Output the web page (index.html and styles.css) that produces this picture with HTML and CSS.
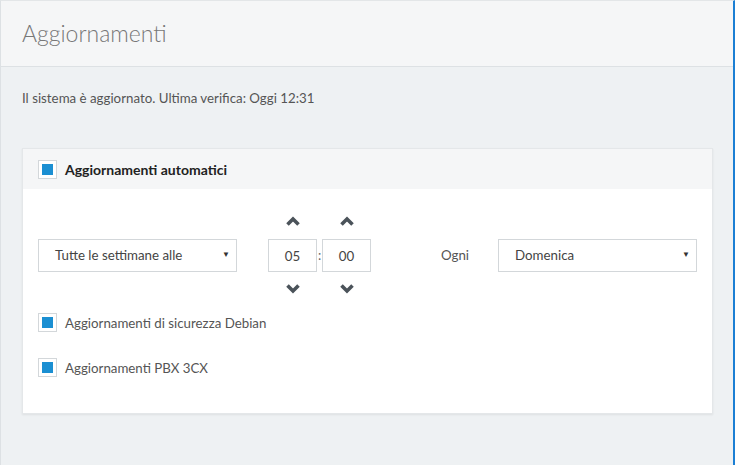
FILE: index.html
```html
<!DOCTYPE html>
<html lang="it">
<head>
<meta charset="utf-8">
<title>Aggiornamenti</title>
<link rel="stylesheet" href="styles.css">
</head>
<body>
<div class="page">
  <header class="page-header">
    <h1 class="page-title">Aggiornamenti</h1>
  </header>
  <main class="page-content">
    <p class="status">Il sistema è aggiornato. Ultima verifica: Oggi 12:31</p>
    <section class="card">
      <div class="card-header">
        <span class="checkbox"><span class="check-fill"></span></span>
        <span class="card-title">Aggiornamenti automatici</span>
      </div>
      <div class="card-body">
        <div class="schedule">
          <div class="select select-wide">
            <span class="select-text">Tutte le settimane alle</span>
            <span class="select-arrow">▼</span>
          </div>
          <div class="time">
            <div class="time-col">
              <span class="chev"><svg viewBox="0 0 14 10" width="14" height="10"><path d="M1.5 8.5 L7 3 L12.5 8.5" fill="none" stroke="#4b535a" stroke-width="3.6" stroke-linejoin="miter"/></svg></span>
              <div class="time-box">05</div>
              <span class="chev"><svg viewBox="0 0 14 10" width="14" height="10"><path d="M1.5 1.5 L7 7 L12.5 1.5" fill="none" stroke="#4b535a" stroke-width="3.6" stroke-linejoin="miter"/></svg></span>
            </div>
            <span class="colon">:</span>
            <div class="time-col">
              <span class="chev"><svg viewBox="0 0 14 10" width="14" height="10"><path d="M1.5 8.5 L7 3 L12.5 8.5" fill="none" stroke="#4b535a" stroke-width="3.6" stroke-linejoin="miter"/></svg></span>
              <div class="time-box">00</div>
              <span class="chev"><svg viewBox="0 0 14 10" width="14" height="10"><path d="M1.5 1.5 L7 7 L12.5 1.5" fill="none" stroke="#4b535a" stroke-width="3.6" stroke-linejoin="miter"/></svg></span>
            </div>
          </div>
          <span class="every">Ogni</span>
          <div class="select select-wide">
            <span class="select-text">Domenica</span>
            <span class="select-arrow">▼</span>
          </div>
        </div>
        <div class="option">
          <span class="checkbox"><span class="check-fill"></span></span>
          <span class="option-label">Aggiornamenti di sicurezza Debian</span>
        </div>
        <div class="option">
          <span class="checkbox"><span class="check-fill"></span></span>
          <span class="option-label">Aggiornamenti PBX 3CX</span>
        </div>
      </div>
    </section>
  </main>
</div>
</body>
</html>
```
FILE: styles.css
```css
* { box-sizing: border-box; }
html, body { margin: 0; padding: 0; }
body {
  font-family: Lato, "Noto Sans", "Liberation Sans", sans-serif;
  color: #555;
  background: #eef1f3;
}
.page {
  width: 735px;
  height: 465px;
  background: #eef1f3;
  border-left: 1px solid #dde1e4;
  border-top: 1px solid #e3e6e8;
  border-right: 2px solid #1b7fd4;
  overflow: hidden;
}
.page-header {
  height: 66px;
  background: #f5f6f7;
  border-bottom: 1px solid #dde1e4;
  padding-left: 21px;
  display: flex;
  align-items: center;
}
.page-title {
  margin: 0 0 2px 0;
  font-size: 23px;
  font-weight: 300;
  color: #777;
}
.page-content {
  padding: 22px 20px 0 21px;
}
.status {
  margin: 0;
  font-size: 13.3px;
  line-height: 18px;
  color: #555;
}
.card {
  margin-top: 41px;
  background: #fff;
  border: 1px solid #e4e7e9;
  box-shadow: 0 1px 2px rgba(0,0,0,0.07);
}
.card-header {
  height: 40px;
  background: #f5f6f7;
  display: flex;
  align-items: center;
  padding-left: 15px;
  gap: 8px;
}
.card-title {
  font-size: 14px;
  font-weight: 700;
  color: #222;
}
.checkbox {
  width: 19px;
  height: 19px;
  border: 1px solid #d3d7da;
  background: #fff;
  display: flex;
  align-items: center;
  justify-content: center;
  flex: none;
}
.check-fill {
  width: 11px;
  height: 11px;
  background: #1b8fd2;
}
.card-body {
  padding: 20px 15px 36px 15px;
}
.schedule {
  display: flex;
  align-items: center;
}
.select {
  height: 33px;
  border: 1px solid #d3d7da;
  background: #fff;
  display: flex;
  align-items: center;
  justify-content: space-between;
  padding: 0 6px 0 16px;
  font-size: 13.3px;
  color: #444;
}
.select-wide { width: 199px; }
.select-arrow {
  font-size: 8px;
  color: #333;
  margin-top: -2px;
}
.time {
  display: flex;
  align-items: center;
  margin-left: 31px;
}
.time-col {
  display: flex;
  flex-direction: column;
  align-items: center;
}
.chev {
  height: 24px;
  display: flex;
  align-items: center;
  justify-content: center;
}
.time-col .time-box { margin: 6px 0 5px; }
.time-box {
  width: 49px;
  height: 33px;
  border: 1px solid #d3d7da;
  display: flex;
  align-items: center;
  justify-content: center;
  font-size: 13.3px;
  color: #444;
}
.colon {
  width: 5px;
  text-align: center;
  font-size: 13px;
  color: #666;
}
.every {
  margin-left: 70px;
  width: 57px;
  font-size: 13.3px;
  color: #555;
}
.option {
  display: flex;
  align-items: center;
  gap: 8px;
  margin-top: 12px;
  height: 19px;
}
.option + .option { margin-top: 26px; }
.option-label {
  font-size: 13.3px;
  color: #555;
}
```
